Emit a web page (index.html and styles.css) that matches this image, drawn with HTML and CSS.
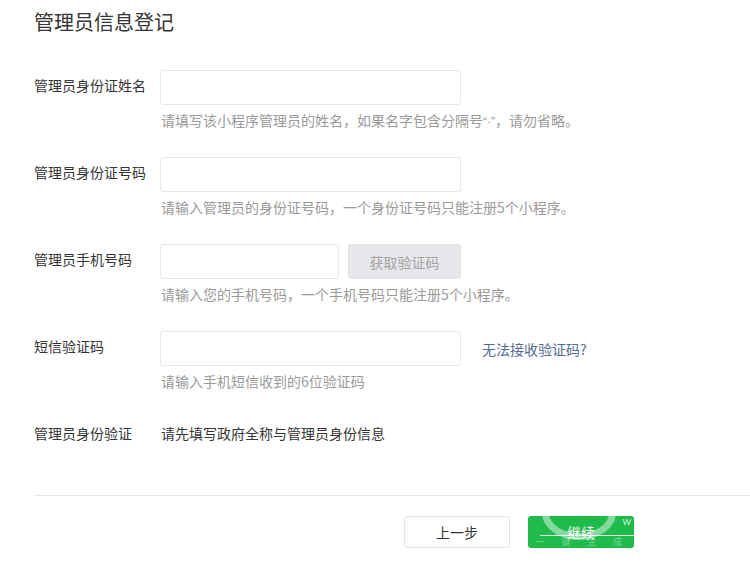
FILE: index.html
```html
<!DOCTYPE html>
<html lang="zh-CN">
<head>
    <meta charset="UTF-8">
    <meta name="viewport" content="width=device-width, initial-scale=1.0">
    <title>管理员信息登记</title>
    <link rel="stylesheet" href="styles.css">
</head>
<body>

<div class="page">
    <h2 class="title">管理员信息登记</h2>

    <form class="form">
        <div class="row">
            <label class="label">管理员身份证姓名</label>
            <div class="field">
                <input type="text" class="input">
                <p class="tips">请填写该小程序管理员的姓名，如果名字包含分隔号<span class="latin">“·”</span>，请勿省略。</p>
            </div>
        </div>

        <div class="row">
            <label class="label">管理员身份证号码</label>
            <div class="field">
                <input type="text" class="input">
                <p class="tips">请输入管理员的身份证号码，一个身份证号码只能注册5个小程序。</p>
            </div>
        </div>

        <div class="row">
            <label class="label">管理员手机号码</label>
            <div class="field">
                <div class="inline">
                    <input type="text" class="input input-short">
                    <button type="button" class="btn-code" disabled>获取验证码</button>
                </div>
                <p class="tips">请输入您的手机号码，一个手机号码只能注册5个小程序。</p>
            </div>
        </div>

        <div class="row">
            <label class="label">短信验证码</label>
            <div class="field">
                <div class="inline">
                    <input type="text" class="input">
                    <a href="#" class="link">无法接收验证码?</a>
                </div>
                <p class="tips">请输入手机短信收到的6位验证码</p>
            </div>
        </div>

        <div class="row row-text">
            <label class="label">管理员身份验证</label>
            <div class="field">
                <span class="plain">请先填写政府全称与管理员身份信息</span>
            </div>
        </div>
    </form>

    <div class="footer">
        <button type="button" class="btn btn-default">上一步</button>
        <button type="button" class="btn btn-primary">
            <!-- watermark over the button -->
            <span class="mark">
                <span class="mark-ring"></span>
                <span class="mark-w">W</span>
                <span class="mark-line"></span>
                <span class="mark-text"><span>一</span><span>键</span><span>生</span><span>成</span></span>
            </span>
            <span class="btn-label">继续</span>
        </button>
    </div>
</div>

</body>
</html>
```

FILE: styles.css
```css
body {
    margin: 0;
    background: #fff;
    font-family: "Noto Sans CJK SC", "Liberation Sans", sans-serif;
    color: #353535;
    overflow: hidden;
}
.page {
    padding: 0 0 0 34px;
}
.title {
    margin: 0;
    padding-top: 8px;
    font-size: 20px;
    font-weight: normal;
    line-height: 28px;
    color: #353535;
}
.form {
    margin-top: 34px;
}
.row {
    display: flex;
    margin-bottom: 27px;
}
.label {
    width: 126px;
    flex-shrink: 0;
    font-size: 14px;
    line-height: 30px;
    color: #353535;
}
.field {
    flex: 1;
}
.inline {
    display: flex;
    align-items: center;
}
.input {
    box-sizing: border-box;
    width: 301px;
    height: 35px;
    margin: 0;
    padding: 0 10px;
    border: 1px solid #e7e7eb;
    border-radius: 3px;
    background: #fff;
    font-size: 14px;
    outline: none;
}
.input-short {
    width: 179px;
}
.btn-code {
    box-sizing: border-box;
    width: 113px;
    height: 35px;
    margin-left: 9px;
    border: 1px solid #e2e2e6;
    border-radius: 3px;
    background: #e7e7eb;
    color: #a3a3a3;
    font-family: inherit;
    font-size: 14px;
}
.link {
    margin-left: 21px;
    color: #576b95;
    font-size: 14px;
    text-decoration: none;
}
.tips {
    height: 20px;
    margin: 5px 0 0 1px;
    font-size: 14px;
    line-height: 20px;
    color: #9a9a9a;
}
.latin {
    font-family: "Liberation Sans", sans-serif;
    font-size: 12px;
    line-height: 1;
}
.row-text {
    margin-bottom: 0;
}
.plain {
    display: block;
    margin-left: 1px;
    font-size: 14px;
    line-height: 30px;
    color: #353535;
}
.footer {
    margin-top: 47px;
    padding: 20px 0 0 370px;
    border-top: 1px solid #e7e7eb;
    display: flex;
    gap: 18px;
}
.btn {
    box-sizing: border-box;
    width: 106px;
    height: 32px;
    border-radius: 3px;
    font-family: inherit;
    font-size: 14px;
    cursor: pointer;
}
.btn-default {
    border: 1px solid #e4e4e4;
    background: #fff;
    color: #353535;
}
.btn-primary {
    position: relative;
    overflow: hidden;
    border: none;
    background: #1fbb4b;
    color: #fff;
    padding: 0;
}
.btn-label {
    position: relative;
}
.mark {
    position: absolute;
    left: 0;
    top: 0;
    width: 100%;
    height: 100%;
    pointer-events: none;
}
.mark-ring {
    position: absolute;
    left: 14px;
    top: -30px;
    width: 60px;
    height: 40px;
    border: 7px solid rgba(255, 255, 255, 0.45);
    border-radius: 50%;
}
.mark-w {
    position: absolute;
    right: 3px;
    top: 1px;
    font-size: 9px;
    line-height: 10px;
    color: rgba(255, 255, 255, 0.8);
    font-family: "Liberation Sans", sans-serif;
}
.mark-line {
    position: absolute;
    left: 12px;
    right: 0;
    top: 19px;
    height: 1px;
    background: rgba(255, 255, 255, 0.85);
}
.mark-text {
    position: absolute;
    left: 8px;
    right: 12px;
    bottom: 1px;
    display: flex;
    justify-content: space-between;
    font-size: 9px;
    line-height: 10px;
    color: rgba(255, 255, 255, 0.4);
}
```
